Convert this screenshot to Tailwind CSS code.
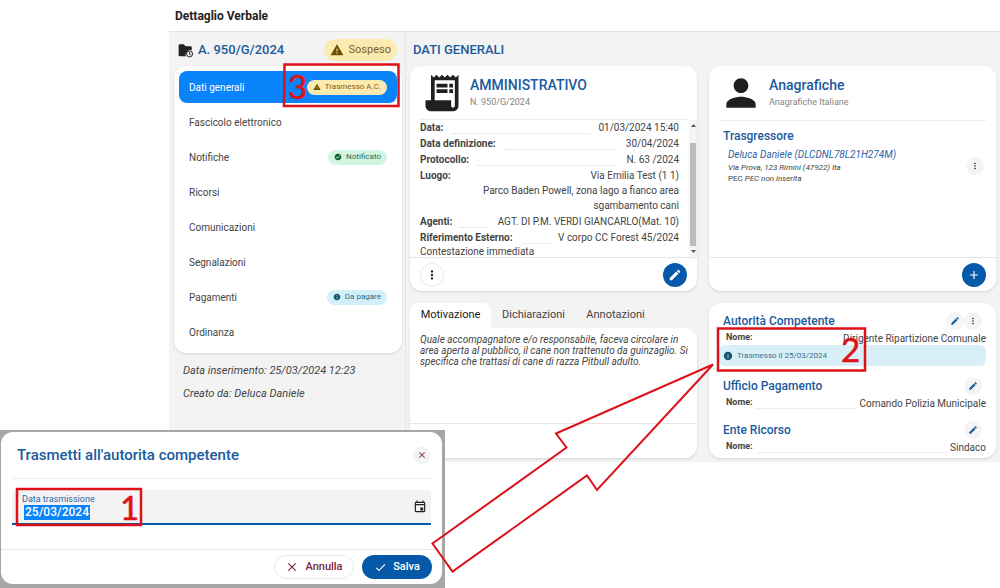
<!DOCTYPE html>
<html lang="it">
<head>
<meta charset="utf-8">
<title>Dettaglio Verbale</title>
<script src="https://cdn.jsdelivr.net/npm/@tailwindcss/browser@4"></script>
</head>
<body class="relative min-h-screen bg-white font-['Roboto',sans-serif] text-[10px] text-[#444] overflow-x-hidden">

<svg class="hidden" aria-hidden="true">
  <symbol id="warn" viewBox="0 0 24 24"><path d="M1 21h22L12 2 1 21zm12-3h-2v-2h2v2zm0-4h-2v-4h2v4z"/></symbol>
  <symbol id="check" viewBox="0 0 24 24"><path d="M12 2C6.48 2 2 6.48 2 12s4.48 10 10 10 10-4.48 10-10S17.52 2 12 2zm-2 15l-5-5 1.41-1.41L10 14.17l7.59-7.59L19 8l-9 9z"/></symbol>
  <symbol id="info" viewBox="0 0 24 24"><path d="M12 2C6.48 2 2 6.48 2 12s4.48 10 10 10 10-4.48 10-10S17.52 2 12 2zm1 15h-2v-6h2v6zm0-8h-2V7h2v2z"/></symbol>
  <symbol id="edit" viewBox="0 0 24 24"><path d="M3 17.25V21h3.75L17.81 9.94l-3.75-3.75L3 17.25zM20.71 7.04a1 1 0 000-1.41l-2.34-2.34a1 1 0 00-1.41 0l-1.83 1.83 3.75 3.75 1.83-1.83z"/></symbol>
  <symbol id="more" viewBox="0 0 24 24"><path d="M12 8c1.1 0 2-.9 2-2s-.9-2-2-2-2 .9-2 2 .9 2 2 2zm0 2c-1.1 0-2 .9-2 2s.9 2 2 2 2-.9 2-2-.9-2-2-2zm0 6c-1.1 0-2 .9-2 2s.9 2 2 2 2-.9 2-2-.9-2-2-2z"/></symbol>
  <symbol id="close" viewBox="0 0 24 24"><path d="M19 6.41L17.59 5 12 10.59 6.41 5 5 6.41 10.59 12 5 17.59 6.41 19 12 13.41 17.59 19 19 17.59 13.41 12z"/></symbol>
</svg>

<header class="ml-[169px] h-[31px] pl-[6px] flex items-center">
  <h1 class="text-[12px] font-bold text-[#222]">Dettaglio Verbale</h1>
</header>

<main class="ml-[169px] flex border-t border-[#dfe1e3] bg-[#f3f3f3]">
  <aside class="w-[237px] shrink-0 border-r border-[#e6e6e6] pl-[5px] pr-[3px]">
    <div class="flex h-[34px] items-center pl-1 pr-[5px] pt-[2px]">
      <svg class="h-[15px] w-[15px]" viewBox="0 0 24 24"><path fill="#222" d="M1 4q0-2 2-2h6l3 3h8q2 0 2 2v4.500a8 8 0 0 0-9.500 9.500H3q-2 0-2-2z"/><circle cx="18.500" cy="17.500" r="4.800" fill="none" stroke="#222" stroke-width="1.600"/><path fill="none" stroke="#222" stroke-width="1.500" d="M18.500 14.500v3.500l2.500 1.300"/></svg>
      <h2 class="ml-[5px] text-[13px] font-medium text-[#1a5a9e]">A. 950/G/2024</h2>
      <span class="ml-auto flex h-[22px] items-center gap-[5px] rounded-full bg-[#fbebb0] px-[6px] text-[11px] text-[#816217]"><svg class="h-[14px] w-[14px] fill-[#6b4c00]"><use href="#warn"/></svg>Sospeso</span>
    </div>
    <nav class="flex flex-col gap-[3px] rounded-xl bg-white px-[5px] pt-[5px] pb-[5px] shadow-sm">
      <a href="#" class="flex h-8 items-center justify-between rounded-lg bg-[#0a84fb] px-[10px] text-white">Dati generali <span class="flex h-[15px] items-center gap-1 rounded-full bg-[#fbebb0] px-[6px] text-[8px] text-[#816217]"><svg class="h-2 w-2 fill-[#6b4c00]"><use href="#warn"/></svg>Trasmesso A.C.</span></a>
      <a href="#" class="flex h-8 items-center px-[10px]">Fascicolo elettronico</a>
      <a href="#" class="flex h-8 items-center justify-between px-[10px]">Notifiche <span class="flex h-[15px] items-center gap-1 rounded-full bg-[#d2f5e2] px-[6px] text-[8px] text-[#28704c]"><svg class="h-2 w-2 fill-[#0e5a34]"><use href="#check"/></svg>Notificato</span></a>
      <a href="#" class="flex h-8 items-center px-[10px]">Ricorsi</a>
      <a href="#" class="flex h-8 items-center px-[10px]">Comunicazioni</a>
      <a href="#" class="flex h-8 items-center px-[10px]">Segnalazioni</a>
      <a href="#" class="flex h-8 items-center justify-between px-[10px]">Pagamenti <span class="flex h-[15px] items-center gap-1 rounded-full bg-[#d2effa] px-[6px] text-[8px] text-[#2f6c85]"><svg class="h-2 w-2 fill-[#14566f]"><use href="#info"/></svg>Da pagare</span></a>
      <a href="#" class="flex h-8 items-center px-[10px]">Ordinanza</a>
    </nav>
    <div class="pt-[6px] pl-[9px] text-[11px] italic leading-[23px] text-[#444]">
      <p>Data inserimento: 25/03/2024 12:23</p>
      <p>Creato da: Deluca Daniele</p>
    </div>
  </aside>

  <section class="min-w-0 grow pr-1 pb-1 pl-1">
    <h2 class="flex h-[34px] items-center pl-[3px] pt-[2px] text-[13px] font-medium text-[#1a5a9e]">DATI GENERALI</h2>
    <div class="grid grid-cols-2 gap-3">

      <article class="flex flex-col overflow-hidden rounded-xl bg-white shadow-sm">
        <div class="mx-[10px] flex h-[54px] items-center gap-[6px] border-b border-[#ececec]">
          <svg class="h-11 w-11 fill-[#1f1f1f]" viewBox="0 0 24 24"><path fill-rule="evenodd" d="M19.500 3.500L18 2l-1.500 1.500L15 2l-1.500 1.500L12 2l-1.500 1.500L9 2 7.500 3.500 6 2v14H3v3c0 1.660 1.340 3 3 3h12c1.660 0 3-1.340 3-3V2l-1.500 1.500zM19 19c0 .55-.45 1-1 1s-1-.45-1-1v-3H8V5h11v14z"/><path d="M9 7h6v2H9zM16 7h2v2h-2zM9 10h6v2H9zM16 10h2v2h-2z"/></svg>
          <div>
            <h3 class="text-[14px] leading-[18px] font-medium text-[#1a5a9e]">AMMINISTRATIVO</h3>
            <p class="text-[9px] leading-4 text-[#858585]">N. 950/G/2024</p>
          </div>
        </div>
        <div class="flex h-[138px] overflow-hidden border-b border-[#e5e5e5]">
          <dl class="grow pr-[10px] pl-[10px] leading-[15px]">
            <div class="mb-px flex gap-2"><dt class="font-bold">Data:</dt><dd class="mb-px grow border-b border-dotted border-[#ddd]"></dd><dd>01/03/2024 15:40</dd></div>
            <div class="mb-px flex gap-2"><dt class="font-bold">Data definizione:</dt><dd class="mb-px grow border-b border-dotted border-[#ddd]"></dd><dd>30/04/2024</dd></div>
            <div class="mb-px flex gap-2"><dt class="font-bold">Protocollo:</dt><dd class="mb-px grow border-b border-dotted border-[#ddd]"></dd><dd>N. 63 /2024</dd></div>
            <div class="mb-px flex justify-between"><dt class="font-bold">Luogo:</dt><dd class="text-right">Via Emilia Test (1 1)<br>Parco Baden Powell, zona lago a fianco area<br>sgambamento cani</dd></div>
            <div class="mb-px flex gap-2"><dt class="font-bold">Agenti:</dt><dd class="mb-px grow border-b border-dotted border-[#ddd]"></dd><dd>AGT. DI P.M. VERDI GIANCARLO(Mat. 10)</dd></div>
            <div class="flex gap-2"><dt class="font-bold">Riferimento Esterno:</dt><dd class="mb-px grow border-b border-dotted border-[#ddd]"></dd><dd>V corpo CC Forest 45/2024</dd></div>
            <div class="leading-[13px]"><dd>Contestazione immediata</dd></div>
          </dl>
          <div class="flex w-2 flex-col items-center justify-between bg-[#f4f4f4] py-1">
            <svg class="h-[3px] w-[5px]" viewBox="0 0 5 3"><path fill="#555" d="M0 3L2.500 0 5 3z"/></svg>
            <div class="mt-4 mb-1 w-[6px] grow bg-[#bcbcbc]"></div>
            <svg class="h-[3px] w-[5px]" viewBox="0 0 5 3"><path fill="#555" d="M0 0L2.500 3 5 0z"/></svg>
          </div>
        </div>
        <div class="flex h-[33px] items-center justify-between px-[10px]">
          <button aria-label="Altro" class="flex h-6 w-6 items-center justify-center rounded-full border border-[#e8e8e8]"><svg class="h-[14px] w-[14px] fill-[#222]"><use href="#more"/></svg></button>
          <button aria-label="Modifica" class="flex h-6 w-6 items-center justify-center rounded-full bg-[#0559a8]"><svg class="h-[14px] w-[14px] fill-white"><use href="#edit"/></svg></button>
        </div>
      </article>

      <article class="flex flex-col overflow-hidden rounded-xl bg-white shadow-sm">
        <div class="mx-[10px] flex h-[55px] items-center gap-[6px] border-b border-[#ececec]">
          <svg class="h-11 w-11 fill-[#1f1f1f]" viewBox="0 0 24 24"><path d="M12 12c2.210 0 4-1.790 4-4s-1.790-4-4-4-4 1.790-4 4 1.790 4 4 4zm0 2c-2.670 0-8 1.340-8 4v2h16v-2c0-2.660-5.330-4-8-4z"/></svg>
          <div>
            <h3 class="text-[14px] leading-[18px] font-medium text-[#1a5a9e]">Anagrafiche</h3>
            <p class="text-[9px] leading-4 text-[#858585]">Anagrafiche Italiane</p>
          </div>
        </div>
        <div class="grow px-[14px] pt-[6px]">
          <h4 class="text-[12px] leading-[18px] font-medium text-[#1a5a9e]">Trasgressore</h4>
          <div class="mt-[3px] flex items-center justify-between pl-[5px] italic">
            <div>
              <a href="#" class="block text-[10px] leading-[14px] text-[#2c64a4]">Deluca Daniele (DLCDNL78L21H274M)</a>
              <p class="text-[8px] leading-[11px]">Via Prova, 123 Rimini (47922) Ita</p>
              <p class="text-[8px] leading-[11px]"><span class="not-italic">PEC</span> PEC non inserita</p>
            </div>
            <button aria-label="Altro" class="-mr-[2px] flex h-[18px] w-[18px] items-center justify-center rounded-full bg-[#f4f4f4]"><svg class="h-[10px] w-[10px] fill-[#222]"><use href="#more"/></svg></button>
          </div>
        </div>
        <div class="flex h-[34px] items-center justify-end border-t border-[#e5e5e5] px-[10px]">
          <button aria-label="Aggiungi" class="flex h-6 w-6 items-center justify-center rounded-full bg-[#0559a8]"><svg class="h-[14px] w-[14px] fill-white" viewBox="0 0 24 24"><path d="M19 13h-6v6h-2v-6H5v-2h6V5h2v6h6v2z"/></svg></button>
        </div>
      </article>

      <article class="flex flex-col">
        <div role="tablist" class="flex h-[25px] text-[11px] text-[#444]">
          <button role="tab" aria-selected="true" class="w-[81px] rounded-t-lg bg-white text-[#222]">Motivazione</button>
          <button role="tab" aria-selected="false" class="w-[85px]">Dichiarazioni</button>
          <button role="tab" aria-selected="false" class="w-[79px]">Annotazioni</button>
        </div>
        <div class="flex grow flex-col rounded-xl rounded-tl-none bg-white shadow-sm">
          <p class="grow border-b border-[#e5e5e5] pr-1 pl-[10px] pt-[6px] text-[10px] leading-[11px] italic text-[#444]">Quale accompagnatore e/o responsabile, faceva circolare in<br>area aperta al pubblico, il cane non trattenuto da guinzaglio. Si<br>specifica che trattasi di cane di razza Pitbull adulto.</p>
          <div class="h-[34px]"></div>
        </div>
      </article>

      <article class="flex flex-col rounded-xl bg-white px-[10px] pt-2 pb-1 shadow-sm">
        <div class="flex h-5 items-center pl-1">
          <h4 class="grow text-[12px] font-medium text-[#1a5a9e]">Autorità Competente</h4>
          <button aria-label="Modifica autorità" class="flex h-[18px] w-[18px] items-center justify-center rounded-full bg-[#f4f4f4]"><svg class="h-[10px] w-[10px] fill-[#1a5a9e]"><use href="#edit"/></svg></button>
          <button aria-label="Altro" class="mr-1 flex h-[18px] w-[18px] items-center justify-center rounded-full bg-[#f4f4f4]"><svg class="h-[10px] w-[10px] fill-[#222]"><use href="#more"/></svg></button>
        </div>
        <dl class="flex h-[14px] items-center justify-between pl-[7px]"><dt class="text-[9px] font-bold">Nome:</dt><dd>Dirigente Ripartizione Comunale</dd></dl>
        <p class="flex h-[21px] items-center gap-1 rounded-md bg-[#d8eff8] pl-1 text-[8px] text-[#37718a]"><svg class="h-[10px] w-[10px] fill-[#14566f]"><use href="#info"/></svg>Trasmesso il 25/03/2024</p>
        <div class="mt-[10px] flex h-5 items-center pl-1">
          <h4 class="grow text-[12px] font-medium text-[#1a5a9e]">Ufficio Pagamento</h4>
          <button aria-label="Modifica ufficio" class="mr-1 flex h-[18px] w-[18px] items-center justify-center rounded-full bg-[#f4f4f4]"><svg class="h-[10px] w-[10px] fill-[#1a5a9e]"><use href="#edit"/></svg></button>
        </div>
        <dl class="flex h-[14px] items-center gap-1 pl-[7px]"><dt class="text-[9px] font-bold">Nome:</dt><dd class="h-3 grow border-b border-dotted border-[#ddd]"></dd><dd>Comando Polizia Municipale</dd></dl>
        <div class="mt-[10px] flex h-5 items-center pl-1">
          <h4 class="grow text-[12px] font-medium text-[#1a5a9e]">Ente Ricorso</h4>
          <button aria-label="Modifica ente" class="mr-1 flex h-[18px] w-[18px] items-center justify-center rounded-full bg-[#f4f4f4]"><svg class="h-[10px] w-[10px] fill-[#1a5a9e]"><use href="#edit"/></svg></button>
        </div>
        <dl class="flex h-[14px] items-center gap-1 pl-[7px]"><dt class="text-[9px] font-bold">Nome:</dt><dd class="h-3 grow border-b border-dotted border-[#ddd]"></dd><dd>Sindaco</dd></dl>
      </article>
    </div>
  </section>
</main>

<!-- Transmission dialog -->
<div class="absolute top-[430px] left-0 w-[445px] bg-[#a6a6a6] pt-[2px] pr-[3px] pb-1 pl-px">
  <form role="dialog" aria-labelledby="dlg" class="rounded-xl bg-white">
    <div class="mx-[11px] flex h-[47px] items-center justify-between border-b border-[#ececec] pl-[5px]">
      <h2 id="dlg" class="text-[15px] font-medium text-[#1a5a9e]">Trasmetti all'autorita competente</h2>
      <button type="button" aria-label="Chiudi" class="flex h-[18px] w-[18px] items-center justify-center rounded-full bg-[#f4f4f4]"><svg class="h-[10px] w-[10px] fill-[#7c2633]"><use href="#close"/></svg></button>
    </div>
    <div class="mx-[11px] mt-[11px] flex h-[35px] items-center justify-between rounded-t border-b-2 border-[#0559a8] bg-[#f3f3f3] pr-1 pl-[10px]">
      <div>
        <label for="data" class="block text-[9px] leading-[11px] text-[#2c64a4]">Data trasmissione</label>
        <input id="data" type="text" value="25/03/2024" class="ml-[2px] block h-[15px] w-[66px] bg-[#0a84fb] text-center text-[12px] font-medium text-white outline-none">
      </div>
      <button type="button" aria-label="Calendario"><svg class="h-[14px] w-[14px] fill-[#222]" viewBox="0 0 24 24"><path d="M17.500 13h-5v5h5v-5zM16 1v2H8V1H6v2H5c-1.110 0-1.990.9-1.990 2L3 19c0 1.100.89 2 2 2h14c1.100 0 2-.9 2-2V5c0-1.100-.9-2-2-2h-1V1h-2zm3 18H5V9h14v10zM5 7V5h14v2z"/></svg></button>
    </div>
    <div class="mt-6 flex h-[35px] items-center justify-end gap-2 border-t border-[#e8e8e8] pr-[10px]">
      <button type="button" class="flex h-6 w-20 items-center justify-center gap-[6px] rounded-full border border-[#e8e8e8] text-[11px] font-medium text-[#7c2633]"><svg class="h-[14px] w-[14px] fill-[#7c2633]"><use href="#close"/></svg>Annulla</button>
      <button type="submit" class="flex h-6 w-[70px] items-center justify-center gap-[6px] rounded-full bg-[#0559a8] text-[11px] font-medium text-white"><svg class="h-[13px] w-[13px] fill-white" viewBox="0 0 24 24"><path d="M9 16.170L4.830 12l-1.420 1.410L9 19 21 7l-1.410-1.410z"/></svg>Salva</button>
    </div>
  </form>
</div>

<!-- Step markers and arrow laid over the page -->
<svg class="pointer-events-none absolute top-0 left-0" width="1000" height="588" viewBox="0 0 1000 588" fill="none" stroke="#dd1219" stroke-width="2.500">
  <path d="M284.500 64.500h114v41.500h-114.500zM718 328.500h147v42H718zM17 489h124v36H17z"/>
  <path stroke-width="2" d="M713 364.500L556 433.500L566.500 447.500L432.500 543.500L452.500 571.500L587 475.500L597 490Z"/>
  <g fill="#dd1219" stroke-width="0.600" font-family="Lato, sans-serif" font-size="33">
    <text x="288" y="99">3</text>
    <text x="841" y="362">2</text>
    <text x="120" y="520">1</text>
  </g>
</svg>
</body>
</html>
